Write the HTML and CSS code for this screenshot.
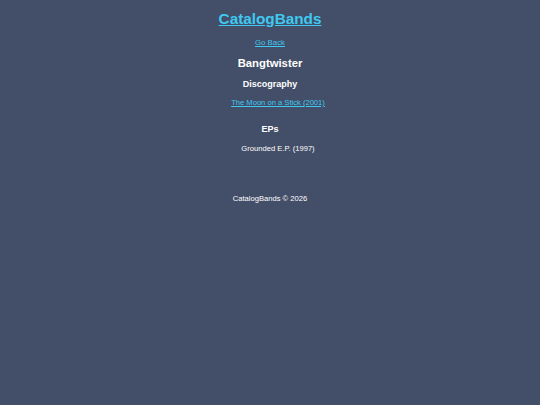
FILE: index.html
```html
<!DOCTYPE html>
<html>
<head>
<meta charset="utf-8">
<link rel="stylesheet" href="styles.css">
</head>
<body>
<header class="site-header">
  <h1 class="site-title"><a href="#">CatalogBands</a></h1>
</header>
<main class="content">
  <a class="back" href="#">Go Back</a>
  <h2 class="band">Bangtwister</h2>
  <h3 class="section">Discography</h3>
  <ul class="list albums">
    <li><a href="#">The Moon on a Stick (2001)</a></li>
  </ul>
  <h3 class="section eps">EPs</h3>
  <ul class="list ep-list">
    <li>Grounded E.P. (1997)</li>
  </ul>
</main>
<footer class="footer">CatalogBands © 2026</footer>
</body>
</html>
```
FILE: styles.css
```css
html, body {
  margin: 0;
  padding: 0;
  background: #434e68;
  color: #ffffff;
  font-family: "Liberation Sans", Arial, sans-serif;
}
body {
  min-height: 405px;
  text-align: center;
}
a {
  color: #3fc9f0;
  text-decoration: underline;
}
.site-header {
  padding-top: 9px;
}
.site-title {
  margin: 0;
  font-size: 15.3px;
  line-height: 19px;
  font-weight: bold;
}
.content {
  display: flex;
  flex-direction: column;
  align-items: center;
}
.back {
  margin-top: 10px;
  font-size: 7.8px;
  line-height: 10px;
}
.band {
  margin: 9px 0 0;
  font-size: 11.3px;
  line-height: 13px;
  font-weight: bold;
}
.section {
  margin: 9px 0 0;
  font-size: 9px;
  line-height: 11px;
  font-weight: bold;
}
.section.eps {
  margin-top: 16px;
}
.list {
  list-style: none;
  margin: 8px 0 0;
  padding: 0 0 0 16px;
  font-size: 7.6px;
  line-height: 10px;
}
.list.ep-list {
  margin-top: 9px;
}
.footer {
  margin-top: 40px;
  font-size: 7.6px;
  line-height: 10px;
}
```
